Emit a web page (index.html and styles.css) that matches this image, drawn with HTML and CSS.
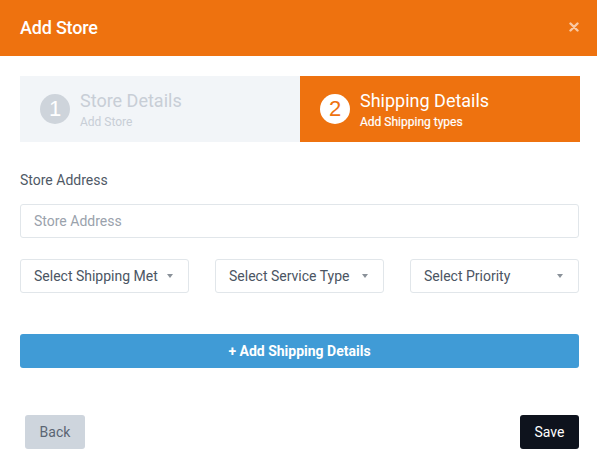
FILE: index.html
```html
<!DOCTYPE html>
<html>
<head>
<meta charset="utf-8">
<link rel="stylesheet" href="styles.css">
</head>
<body>
<div class="modal">
  <div class="header">
    <span class="title">Add Store</span>
    <svg class="close" width="10" height="10" viewBox="0 0 10 10"><path d="M1.5 1.5 L8.5 8.5 M8.5 1.5 L1.5 8.5" stroke="#f9c9a3" stroke-width="2.4" stroke-linecap="round"/></svg>
  </div>
  <div class="body">
    <div class="steps">
      <div class="step step-done">
        <span class="num">1</span>
        <div class="step-text">
          <div class="step-title">Store Details</div>
          <div class="step-sub">Add Store</div>
        </div>
      </div>
      <div class="step step-active">
        <span class="num">2</span>
        <div class="step-text">
          <div class="step-title">Shipping Details</div>
          <div class="step-sub">Add Shipping types</div>
        </div>
      </div>
    </div>
    <div class="label">Store Address</div>
    <div class="input">Store Address</div>
    <div class="selects">
      <div class="select"><span>Select Shipping Met</span><span class="caret"></span></div>
      <div class="select"><span>Select Service Type</span><span class="caret"></span></div>
      <div class="select"><span>Select Priority</span><span class="caret"></span></div>
    </div>
    <div class="add-btn">+ Add Shipping Details</div>
  </div>
  <div class="footer">
    <div class="btn back">Back</div>
    <div class="btn save">Save</div>
  </div>
</div>
</body>
</html>
```
FILE: styles.css
```css
* { box-sizing: border-box; }
html, body { margin: 0; padding: 0; background: #fff; }
body { font-family: Roboto, "Liberation Sans", sans-serif; width: 597px; height: 469px; overflow: hidden; }
.modal { width: 597px; }
.header {
  height: 56px; background: #ee720f; display: flex; align-items: center;
  justify-content: space-between; padding: 0 18px 2px 20px;
}
.title { color: #fff; font-size: 18px; font-weight: 500; letter-spacing: -0.2px; }
.close { display: block; }
.body { padding: 20px 18px 0 20px; }
.steps { display: grid; grid-template-columns: 280px 280px; height: 66px; }
.step { display: flex; align-items: center; padding-left: 20px; gap: 10px; }
.step-done { background: #f2f5f8; }
.step-active { background: #ee720f; }
.num {
  width: 30px; height: 30px; border-radius: 50%; display: flex; align-items: center;
  justify-content: center; font-size: 22px; font-family: "Liberation Sans", Arial, sans-serif;
}
.step-done .num { background: #ced4db; color: #fff; }
.step-active .num { background: #fff; color: #ee720f; }
.step-text { margin-top: 1px; }
.step-title { font-size: 18px; line-height: 22px; }
.step-sub { font-size: 12px; line-height: 16px; margin-top: 2px; }
.step-done .step-title, .step-done .step-sub { color: #c8ced6; }
.step-active .step-title { color: #fff; }
.step-active .step-sub { color: #fff; font-weight: 400; -webkit-text-stroke: 0.2px #fff; }
.label { margin-top: 30px; font-size: 14px; color: #4f5966; line-height: 16px; height: 16px; }
.input {
  margin-top: 16px; height: 34px; border: 1px solid #e1e6ea; border-radius: 3px;
  padding-left: 13px; display: flex; align-items: center; font-size: 14px; color: #9aa2ac;
}
.selects { margin-top: 21px; display: grid; grid-template-columns: repeat(3, 1fr); gap: 26px; }
.select {
  height: 34px; border: 1px solid #e1e6ea; border-radius: 3px; padding: 0 13px;
  display: flex; align-items: center; justify-content: space-between; font-size: 14px; color: #4b5563;
  white-space: nowrap;
}
.caret {
  width: 0; height: 0; border-left: 3.5px solid transparent; border-right: 3.5px solid transparent;
  border-top: 4px solid #8a9199; margin-right: 2px;
}
.add-btn {
  margin-top: 41px; height: 34px; background: #409bd6; border-radius: 3px; color: #fff;
  font-weight: 700; font-size: 14px; display: flex; align-items: center; justify-content: center;
}
.footer { display: flex; justify-content: space-between; padding: 47px 18px 0 25px; }
.btn {
  height: 34px; border-radius: 3px; display: flex; align-items: center; justify-content: center;
  font-size: 14px;
}
.back { width: 60px; background: #ced5dd; color: #5b6573; }
.save { width: 59px; background: #0e131d; color: #fff; }
```
